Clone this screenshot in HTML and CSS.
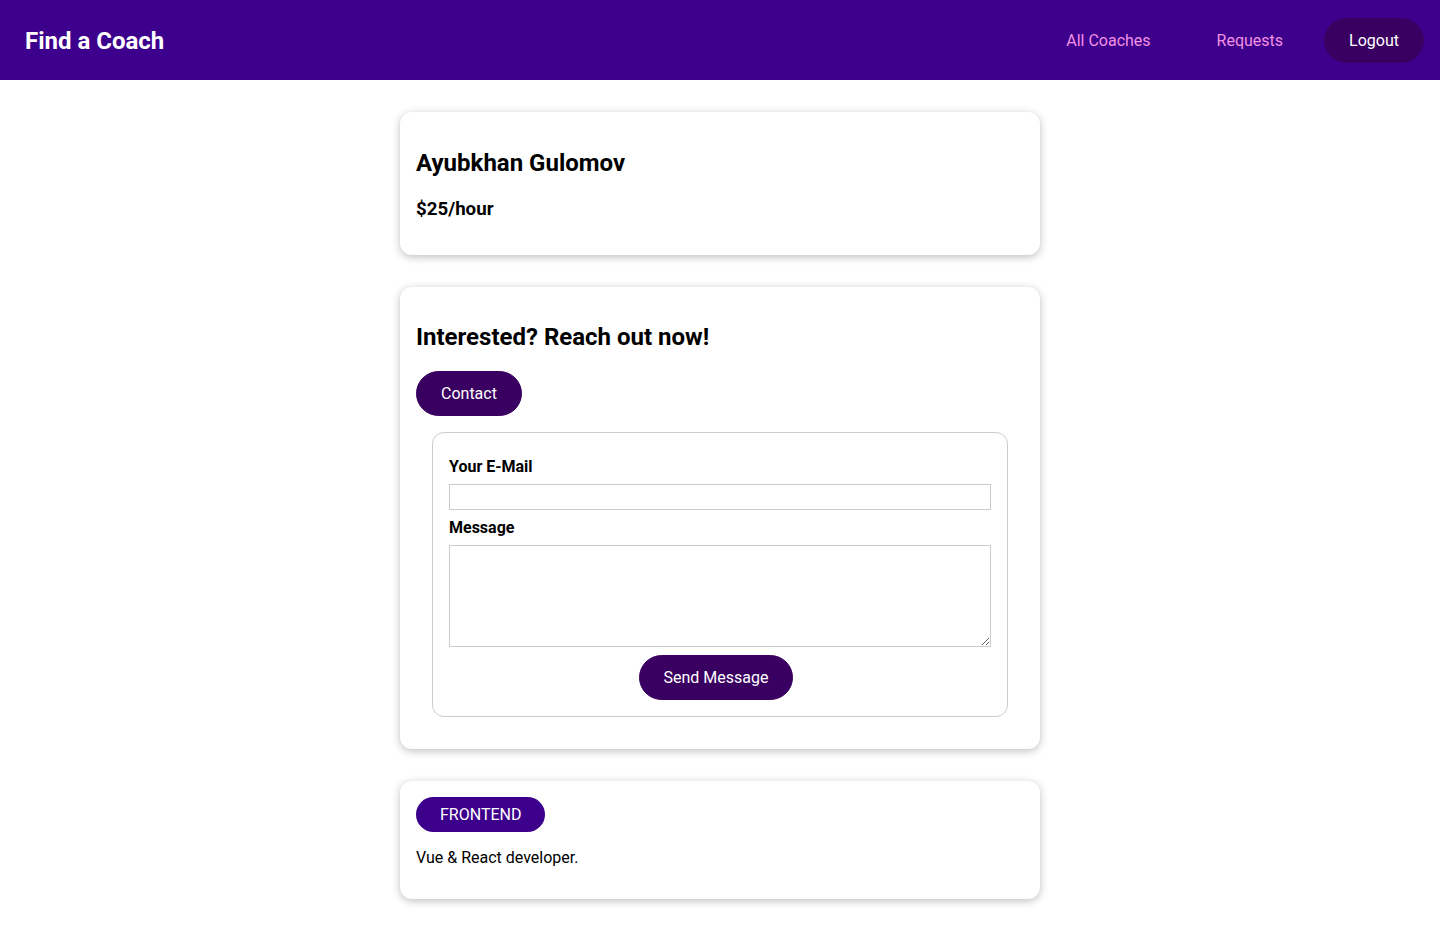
FILE: index.html
```html
<!DOCTYPE html>
<html lang="en">
<head>
<meta charset="utf-8">
<title>Find a Coach</title>
<link rel="stylesheet" href="styles.css">
</head>
<body>
<header class="header">
  <nav class="nav">
    <h1 class="logo"><a href="#" class="logo-link">Find a Coach</a></h1>
    <ul class="nav-list">
      <li class="nav-item"><a href="#" class="nav-link">All Coaches</a></li>
      <li class="nav-item"><a href="#" class="nav-link">Requests</a></li>
      <li class="nav-item"><button class="btn">Logout</button></li>
    </ul>
  </nav>
</header>
<main>
  <section class="section">
    <div class="card">
      <h2 class="title title-name">Ayubkhan Gulomov</h2>
      <h3 class="rate">$25/hour</h3>
    </div>
  </section>
  <section class="section">
    <div class="card">
      <header class="card-header">
        <h2 class="title">Interested? Reach out now!</h2>
        <a href="#" class="btn btn-link">Contact</a>
      </header>
      <form class="contact-form">
        <div class="form-control">
          <label class="label" for="email">Your E-Mail</label>
          <input class="field" type="email" id="email">
        </div>
        <div class="form-control">
          <label class="label" for="message">Message</label>
          <textarea class="field field-area" id="message" rows="5"></textarea>
        </div>
        <div class="actions">
          <button class="btn btn-send" type="button">Send Message</button>
        </div>
      </form>
    </div>
  </section>
  <section class="section">
    <div class="card">
      <div class="badges"><span class="badge">FRONTEND</span></div>
      <p class="desc">Vue &amp; React developer.</p>
    </div>
  </section>
</main>
</body>
</html>
```

FILE: styles.css
```css
* {
  box-sizing: border-box;
}

html {
  font-family: Roboto, "Liberation Sans", sans-serif;
}

body {
  margin: 0;
}

.header {
  width: 100%;
  height: 80px;
  background-color: #3d008d;
  display: flex;
  align-items: center;
}

.nav {
  width: 100%;
  padding-right: 8px;
  display: flex;
  justify-content: space-between;
  align-items: center;
}

.logo {
  margin: 0;
  font-size: 24px;
}

.logo-link {
  display: inline-block;
  padding: 13px 24px 11px;
  border: 1px solid transparent;
  color: #ffffff;
  text-decoration: none;
}

.nav-list {
  list-style: none;
  margin: 0;
  padding: 0;
  display: flex;
  align-items: center;
}

.nav-item {
  margin: 0 8px;
}

.nav-link {
  display: inline-block;
  padding: 12px 24px;
  border: 1px solid transparent;
  color: #f391e3;
  text-decoration: none;
  font-size: 16px;
}

.btn {
  display: inline-block;
  padding: 12px 24px;
  font: inherit;
  font-size: 16px;
  background-color: #3a0061;
  border: 1px solid #3a0061;
  color: #ffffff;
  border-radius: 30px;
  cursor: pointer;
  text-decoration: none;
}

.btn-send {
  margin-right: 8px;
}

.section {
  display: block;
}

.card {
  border-radius: 12px;
  box-shadow: 0 2px 8px rgba(0, 0, 0, 0.26);
  padding: 16px;
  margin: 32px auto;
  max-width: 640px;
}

.title {
  font-size: 24px;
  margin: 20px 0;
}

.title-name {
  margin-top: 21px;
}

.rate {
  font-size: 18.72px;
  line-height: 24px;
  margin: 18.72px 0 17.72px;
}

.card-header {
  display: block;
}

.contact-form {
  margin: 16px;
  border: 1px solid #ccc;
  border-radius: 12px;
  padding: 16px;
}

.form-control {
  margin: 8px 0;
}

.label {
  display: block;
  font-weight: bold;
  margin-bottom: 8px;
}

.field {
  display: block;
  width: 100%;
  font: inherit;
  border: 1px solid #ccc;
  padding: 2.4px;
}

.field-area {
  height: 102px;
}

.actions {
  text-align: center;
}

.badges {
  display: block;
}

.badge {
  display: inline-block;
  background-color: #3d008d;
  color: #ffffff;
  border-radius: 30px;
  padding: 8px 24px;
  margin-right: 8px;
  font-size: 16px;
}

.desc {
  margin: 16px 0;
}
```
